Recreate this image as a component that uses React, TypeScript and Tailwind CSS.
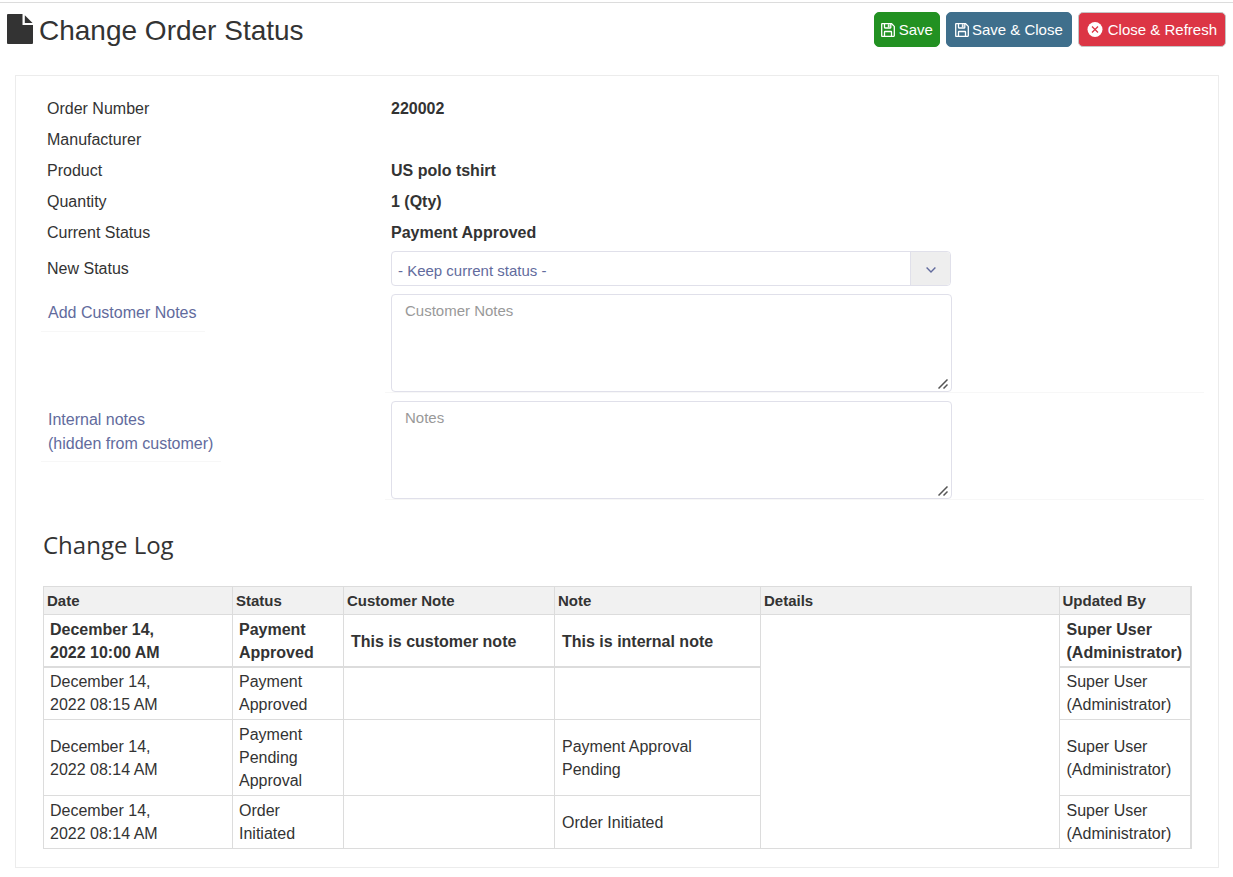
import React from 'react';

const SaveIcon = () => (
  <svg viewBox="0 0 14 14" className="h-[14px] w-[14px]" fill="none" stroke="currentColor" aria-hidden="true">
    <path d="M1.2 .7H10.6L13.3 3.4V12.8Q13.3 13.3 12.8 13.3H1.2Q.7 13.3 .7 12.8V1.2Q.7 .7 1.2 .7Z" strokeWidth="1.3" />
    <path d="M3.5 .7V4.6Q3.5 5 3.9 5H9.4Q9.8 5 9.8 4.6V.7" strokeWidth="1.3" />
    <path d="M3.5 13.3V8.9Q3.5 8.5 3.9 8.5H10.1Q10.5 8.5 10.5 8.9V13.3" strokeWidth="1.3" />
    <path d="M7.2 1.5H8.2V4H7.2Z" fill="currentColor" strokeWidth=".6" />
  </svg>
);

const CloseIcon = () => (
  <svg viewBox="0 0 16 16" className="h-4 w-4" aria-hidden="true">
    <circle cx="8" cy="7.5" r="7.5" fill="currentColor" />
    <path d="M5 4.5L11 10.5M11 4.5L5 10.5" stroke="#dc3545" strokeWidth="1.3" />
  </svg>
);

const FileIcon = () => (
  <svg viewBox="0 0 26 30" className="h-[30px] w-[26px]" fill="currentColor" aria-hidden="true">
    <path d="M1 0H15.5V11H26V29Q26 30 25 30H1Q0 30 0 29V1Q0 0 1 0Z" />
    <path d="M17.8 1.2L25.6 9H17.8Z" />
  </svg>
);

const details: [string, string][] = [
  ['Order Number', '220002'],
  ['Manufacturer', ''],
  ['Product', 'US polo tshirt'],
  ['Quantity', '1 (Qty)'],
  ['Current Status', 'Payment Approved'],
];

type Entry = { date: string[]; status: string[]; customer: string; note: string[] };

const log: Entry[] = [
  { date: ['December 14,', '2022 10:00 AM'], status: ['Payment', 'Approved'], customer: 'This is customer note', note: ['This is internal note'] },
  { date: ['December 14,', '2022 08:15 AM'], status: ['Payment', 'Approved'], customer: '', note: [] },
  { date: ['December 14,', '2022 08:14 AM'], status: ['Payment', 'Pending', 'Approval'], customer: '', note: ['Payment Approval', 'Pending'] },
  { date: ['December 14,', '2022 08:14 AM'], status: ['Order', 'Initiated'], customer: '', note: ['Order Initiated'] },
];

const Lines = ({ text }: { text: string[] }) => (
  <>
    {text.map((line) => (
      <span key={line} className="block">{line}</span>
    ))}
  </>
);

const Notes = ({ id, placeholder }: { id: string; placeholder: string }) => (
  <div className="-mr-3 grow border-b border-[#f7f7f7] pl-1.5">
    <div className="relative w-full max-w-[561px]">
      <textarea
        id={id}
        placeholder={placeholder}
        className="block h-[98px] w-full resize-y rounded-[4px] border border-[#e0e0ea] px-[13px] py-[5px] text-[15px] leading-[22px] placeholder:text-[#999] focus:outline-none [&::-webkit-resizer]:bg-transparent"
      />
      <svg viewBox="0 0 10 10" className="pointer-events-none absolute right-1 bottom-[3px] h-2.5 w-2.5" fill="none" stroke="#555" strokeWidth="1.5" aria-hidden="true">
        <path d="M.5 9.5L9.5 .5M5.5 9.5L9.5 5.5" />
      </svg>
    </div>
  </div>
);

const cell = 'border border-[#dcdcdc] pr-1';
const head = 'border border-[#dcdcdc] px-[3px] py-0.5';
const button = 'flex h-[35px] items-center rounded-[5px] border text-white';
const noteLabel = '-ml-0.5 inline-block border-b border-[#f7f7f7] pt-[7px] pr-2 pl-[7px] text-[#626b9d]';

export default function App() {
  return (
    <div className="mt-0.5 border-t border-[#dcdcdc] bg-white font-['Liberation_Sans',Arial,sans-serif] text-base leading-[23px] text-[#333]">
      <header className="flex items-start justify-between pt-[9px] pr-[7px] pl-[7px]">
        <h1 className="flex items-start gap-1.5 pt-0.5 text-[28px] leading-[34px]">
          <FileIcon />
          Change Order Status
        </h1>
        <div className="flex gap-1.5 text-[15px]">
          <button type="button" className={`${button} gap-1 border-[#229122] bg-[#229122] px-1.5`}>
            <SaveIcon />
            Save
          </button>
          <button type="button" className={`${button} gap-[3px] border-[#3f6f8c] bg-[#3f6f8c] px-2`}>
            <SaveIcon />
            Save &amp; Close
          </button>
          <button type="button" className={`${button} gap-[5px] border-[#c4c4c4] bg-[#dc3545] px-2`}>
            <CloseIcon />
            Close &amp; Refresh
          </button>
        </div>
      </header>

      <main className="mt-[27px] mr-[14px] ml-[15px] border border-[#ececec] pt-[17px] pr-[26px] pb-[18px] pl-[27px]">
        <dl>
          {details.map(([label, value]) => (
            <div key={label} className="flex h-[31px] items-center">
              <dt className="w-[348px] pl-1">{label}</dt>
              <dd className="font-bold">{value}</dd>
            </div>
          ))}
        </dl>

        <form>
          <div className="mt-[3px] flex items-center">
            <label htmlFor="status" className="w-[348px] shrink-0 pl-1">New Status</label>
            <div className="relative w-full max-w-[560px]">
              <select
                id="status"
                className="block h-[35px] w-full appearance-none rounded-[4px] border border-[#e0e0ea] bg-white pt-1 pr-12 pl-1.5 text-[15px] text-[#626b9d] focus:outline-none"
              >
                <option>- Keep current status -</option>
              </select>
              <span className="pointer-events-none absolute inset-y-px right-px flex w-10 items-center justify-center rounded-r-[4px] border-l border-[#e0e0ea] bg-[#eee] pt-0.5 text-[#626b9d]">
                <svg viewBox="0 0 10 6" className="h-1.5 w-2.5" fill="none" stroke="currentColor" strokeWidth="1.4" aria-hidden="true">
                  <path d="M.6 .6L5 5L9.4 .6" />
                </svg>
              </span>
            </div>
          </div>

          <div className="mt-2 flex items-start">
            <div className="w-[342px] shrink-0">
              <label htmlFor="customer-notes" className={`${noteLabel} pb-[7px]`}>
                Add Customer Notes
              </label>
            </div>
            <Notes id="customer-notes" placeholder="Customer Notes" />
          </div>

          <div className="mt-2 flex items-start">
            <div className="w-[342px] shrink-0">
              <label htmlFor="internal-notes" className={`${noteLabel} pb-[5px] leading-6`}>
                Internal notes
                <br />
                (hidden from customer)
              </label>
            </div>
            <Notes id="internal-notes" placeholder="Notes" />
          </div>
        </form>

        <h2 className="mt-7 mb-[25px] font-['Open_Sans',sans-serif] text-2xl leading-[33px]">Change Log</h2>

        <table className="w-full table-fixed border-collapse border border-r-2 border-[#dcdcdc]">
          <colgroup>
            <col className="w-[189px]" />
            <col className="w-[111px]" />
            <col className="w-[211px]" />
            <col className="w-[206px]" />
            <col />
            <col className="w-[132px]" />
          </colgroup>
          <thead>
            <tr className="h-7 bg-[#f1f1f1] text-left text-[15px]">
              {['Date', 'Status', 'Customer Note', 'Note', 'Details', 'Updated By'].map((name) => (
                <th key={name} scope="col" className={head}>{name}</th>
              ))}
            </tr>
          </thead>
          <tbody>
            {log.map((entry, i) => {
              const td =
                i === 0 ? `${cell} border-b-2 pt-[3px] pb-0.5 font-bold`
                : i === 1 ? `${cell} pt-0.5 pb-[3px]`
                : `${cell} pt-[3px] pb-[3px]`;
              return (
                <tr key={i}>
                  <td className={`${td} pl-1.5`}><Lines text={entry.date} /></td>
                  <td className={`${td} pl-1.5`}><Lines text={entry.status} /></td>
                  <td className={`${td} pl-[7px]`}>{entry.customer}</td>
                  <td className={`${td} pl-[7px]`}><Lines text={entry.note} /></td>
                  {i === 0 && <td rowSpan={log.length} className={cell} />}
                  <td className={`${td} pl-[7px]`}><Lines text={['Super User', '(Administrator)']} /></td>
                </tr>
              );
            })}
          </tbody>
        </table>
      </main>
    </div>
  );
}
